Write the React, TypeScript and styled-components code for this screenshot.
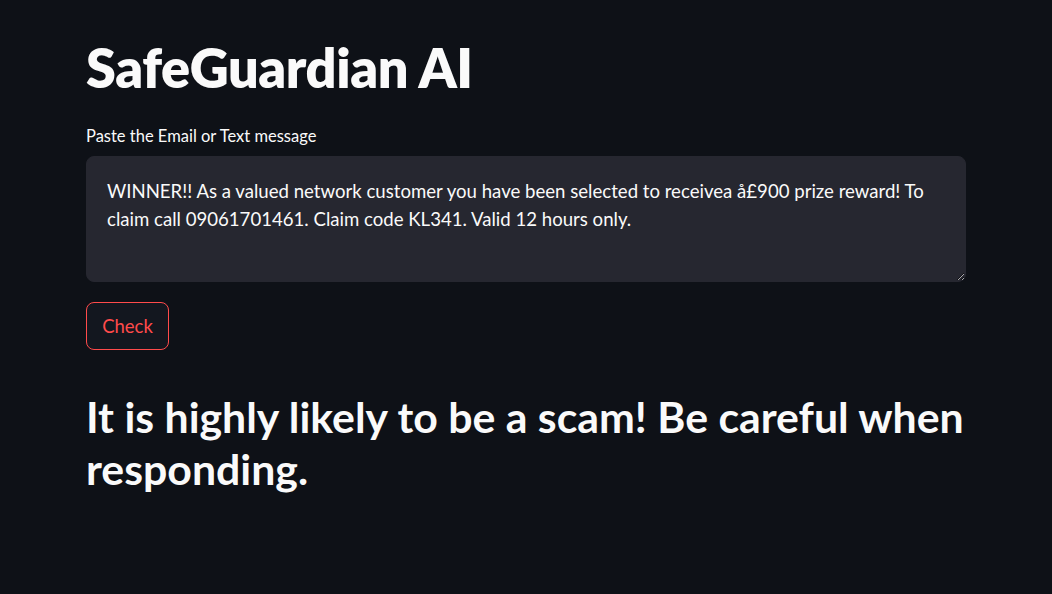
import React from "react";
import styled, { createGlobalStyle } from "styled-components";

const Global = createGlobalStyle`
  html, body { margin: 0; padding: 0; background: #0e1117; }
  body { font-family: Lato, "Noto Sans", sans-serif; color: #fafafa; }
`;

const Page = styled.main`
  min-height: 594px;
  background: #0e1117;
  display: flex;
  justify-content: flex-start;
  padding: 0 86px;
`;

const Column = styled.div`
  width: 880px;
  display: flex;
  flex-direction: column;
  padding-top: 33px;
`;

const Title = styled.h1`
  margin: 0;
  font-size: 54px;
  line-height: 70px;
  font-weight: 800;
  letter-spacing: -0.4px;
`;

const Label = styled.label`
  margin-top: 23px;
  font-size: 16.5px;
  line-height: 20px;
`;

const TextArea = styled.textarea`
  margin-top: 10px;
  box-sizing: border-box;
  width: 880px;
  height: 126px;
  background: #262730;
  color: #fafafa;
  border: 1px solid #262730;
  border-radius: 8px;
  padding: 20px 20px;
  font-family: Lato, "Noto Sans", sans-serif;
  font-size: 18.6px;
  line-height: 28px;
  outline: none;
  resize: vertical;
`;

const Button = styled.button`
  margin-top: 20px;
  align-self: flex-start;
  height: 48px;
  width: 83px;
  padding: 0;
  background: #13171f;
  color: #ff4b4b;
  border: 1px solid #ff4b4b;
  border-radius: 8px;
  font-family: Lato, "Noto Sans", sans-serif;
  font-size: 18.5px;
`;

const Result = styled.h2`
  margin: 41px 0 0;
  font-size: 42.8px;
  line-height: 52px;
  font-weight: 700;
`;

export default function App() {
  return (
    <>
      <Global />
      <Page>
        <Column>
          <Title>SafeGuardian AI</Title>
          <Label>Paste the Email or Text message</Label>
          <TextArea
            readOnly
            defaultValue="WINNER!! As a valued network customer you have been selected to receivea å£900 prize reward! To claim call 09061701461. Claim code KL341. Valid 12 hours only."
          />
          <Button>Check</Button>
          <Result>It is highly likely to be a scam! Be careful when responding.</Result>
        </Column>
      </Page>
    </>
  );
}
